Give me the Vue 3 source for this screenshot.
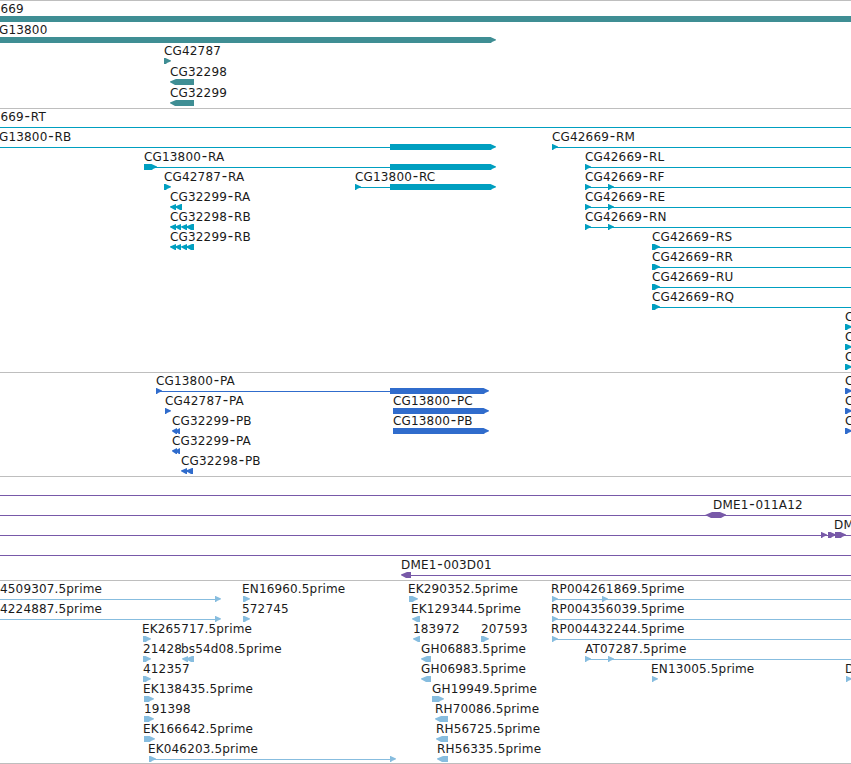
<script setup>
// Glyph spec: '>' forward exon, '<' reverse exon, '=' plain block, 'o' pointed both ways, '-' intron line
const f = (label, x, ...glyphs) => ({ label, x, glyphs })

const geneEnd = ['>', 390, 496]
const reverseExons = [['<', 170, 176], ['<', 175, 181], ['<', 181, 187], ['<', 186, 194]]
const fullLine = ['-', 0, 851]

const tracks = [
  {
    name: 'genes',
    height: 108,
    pitch: 21,
    rows: [
      [f('669', 0.5, ['=', 0, 851])],
      [f('G13800', -1, ['>', -10, 496])],
      [f('CG42787', 164, ['>', 164, 171])],
      [f('CG32298', 170, ['<', 170, 194])],
      [f('CG32299', 170, ['<', 170, 194])],
    ],
  },
  {
    name: 'transcripts',
    height: 264,
    pitch: 20,
    rows: [
      [f('669-RT', 0.5, fullLine)],
      [
        f('G13800-RB', -1, ['-', 0, 390], geneEnd),
        f('CG42669-RM', 552, ['-', 552, 851], ['>', 552, 558]),
      ],
      [
        f('CG13800-RA', 144, ['-', 150, 390], ['>', 144, 157], geneEnd),
        f('CG42669-RL', 585, ['-', 585, 851], ['>', 585, 591]),
      ],
      [
        f('CG42787-RA', 164, ['>', 164, 171]),
        f('CG13800-RC', 355, ['-', 355, 390], ['>', 355, 361], geneEnd),
        f('CG42669-RF', 585, ['-', 585, 851], ['>', 585, 591], ['>', 608, 614]),
      ],
      [
        f('CG32299-RA', 170, ['<', 170, 176], ['<', 175, 182]),
        f('CG42669-RE', 585, ['-', 585, 851], ['>', 585, 591], ['>', 608, 614]),
      ],
      [
        f('CG32298-RB', 170, ...reverseExons),
        f('CG42669-RN', 585, ['-', 585, 851], ['>', 585, 591], ['>', 608, 614]),
      ],
      [
        f('CG32299-RB', 170, ...reverseExons),
        f('CG42669-RS', 652, ['-', 652, 851], ['>', 652, 660]),
      ],
      [f('CG42669-RR', 652, ['-', 652, 851], ['>', 652, 660])],
      [f('CG42669-RU', 652, ['-', 652, 851], ['>', 652, 660])],
      [f('CG42669-RQ', 652, ['-', 652, 851], ['>', 652, 660])],
      [f('C', 845, ['>', 845, 852])],
      [f('C', 845, ['>', 845, 852])],
      [f('C', 845, ['>', 845, 852])],
    ],
  },
  {
    name: 'proteins',
    height: 104,
    pitch: 20,
    rows: [
      [
        f('CG13800-PA', 156, ['-', 156, 390], ['>', 156, 162], ['>', 390, 489]),
        f('C', 845, ['>', 845, 852]),
      ],
      [
        f('CG42787-PA', 165, ['>', 165, 171]),
        f('CG13800-PC', 393, ['>', 393, 489]),
        f('C', 845, ['>', 845, 852]),
      ],
      [
        f('CG32299-PB', 172, ['<', 172, 177], ['<', 175, 180]),
        f('CG13800-PB', 393, ['>', 393, 489]),
        f('C', 845, ['>', 845, 852]),
      ],
      [f('CG32299-PA', 172, ['<', 172, 177], ['<', 175, 180])],
      [f('CG32298-PB', 181, ['<', 181, 187], ['<', 186, 193])],
    ],
  },
  {
    name: 'clones',
    height: 104,
    pitch: 20,
    rows: [
      [f('', 0, fullLine)],
      [f('DME1-011A12', 713, fullLine, ['o', 705, 726])],
      [f('DM', 834, fullLine, ['>', 821, 827], ['>', 828, 836], ['>', 835, 846])],
      [f('', 0, fullLine)],
      [f('DME1-003D01', 401, ['-', 411, 851], ['<', 401, 411])],
    ],
  },
  {
    name: 'ests',
    height: 183,
    pitch: 20,
    rows: [
      [
        f('4509307.5prime', 0, ['-', 0, 215], ['>', 215, 221]),
        f('EN16960.5prime', 242, ['>', 243, 250]),
        f('EK290352.5prime', 408, ['>', 409, 418]),
        f('RP004261869.5prime', 551, ['-', 552, 851], ['>', 552, 558], ['>', 602, 608]),
      ],
      [
        f('4224887.5prime', 0, ['-', 0, 215], ['>', 215, 221]),
        f('572745', 242, ['>', 243, 250]),
        f('EK129344.5prime', 411, ['<', 412, 420]),
        f('RP004356039.5prime', 551, ['-', 552, 851], ['>', 552, 558]),
      ],
      [
        f('EK265717.5prime', 142, ['>', 143, 151]),
        f('183972', 413, ['<', 413, 420]),
        f('207593', 481, ['>', 481, 489]),
        f('RP004432244.5prime', 551, ['-', 552, 851], ['>', 552, 558]),
      ],
      [
        f('21428', 143, ['>', 143, 151]),
        f('bs54d08.5prime', 181, ['<', 182, 188], ['<', 186, 194]),
        f('GH06883.5prime', 421, ['<', 421, 431]),
        f('AT07287.5prime', 585, ['-', 585, 851], ['>', 585, 591], ['>', 608, 614]),
      ],
      [
        f('412357', 143, ['>', 143, 151]),
        f('GH06983.5prime', 421, ['<', 421, 431]),
        f('EN13005.5prime', 651, ['>', 652, 658]),
        f('D', 845, ['>', 846, 852]),
      ],
      [f('EK138435.5prime', 143, ['>', 144, 154]), f('GH19949.5prime', 432, ['>', 432, 444])],
      [f('191398', 144, ['>', 144, 154]), f('RH70086.5prime', 435, ['<', 435, 448])],
      [f('EK166642.5prime', 143, ['>', 144, 155]), f('RH56725.5prime', 436, ['<', 436, 448])],
      [
        f('EK046203.5prime', 148, ['-', 149, 390], ['>', 149, 156], ['>', 390, 396]),
        f('RH56335.5prime', 437, ['<', 437, 448]),
      ],
    ],
  },
]

function glyphPath([kind, a, b]) {
  const tip = Math.min(6, b - a)
  if (kind === '-') return `M${a} 19H${b}V20H${a}Z`
  if (kind === '=') return `M${a} 16H${b}V22H${a}Z`
  if (kind === '>') return `M${a} 16H${b - tip + 0.5}L${b} 18.4V19.2L${b - tip + 2} 21L${b - tip + 1} 22H${a}Z`
  if (kind === '<') return `M${b} 16H${a + tip}L${a} 18.4V19.2L${a + tip - 1} 22H${b}Z`
  return `M${a} 19L${a + 7} 16H${b - 6}L${b} 18.6V19.2L${b - 5} 22H${a + 6}Z`
}
</script>

<template>
  <main class="browser">
    <section
      v-for="track in tracks"
      :key="track.name"
      class="track"
      :class="`track--${track.name}`"
    >
      <svg width="851" :height="track.height - 1" :viewBox="`0 1 851 ${track.height - 1}`">
        <g
          v-for="(row, i) in track.rows"
          :key="i"
          :transform="`translate(0 ${i * track.pitch})`"
        >
          <g v-for="(feature, j) in row" :key="j">
            <path v-for="(g, k) in feature.glyphs" :key="k" :d="glyphPath(g)" />
            <text :x="feature.x" y="13">
              <template v-for="(part, k) in feature.label.split('-')" :key="k"><tspan v-if="k" class="dash" dx="0.7" dy="0.4">-</tspan><tspan :dx="k ? 0.7 : 0" :dy="k ? -0.4 : 0">{{ part }}</tspan></template>
            </text>
          </g>
        </g>
      </svg>
    </section>
  </main>
</template>

<style scoped>
.browser {
  box-sizing: border-box;
  width: 851px;
  height: 764px;
  overflow: hidden;
  background: #fff;
  border-bottom: 1px solid #bebebe;
}

.track {
  border-top: 1px solid #bebebe;
}

.track svg {
  display: block;
  overflow: visible;
}

.track path {
  fill: currentColor;
}

.track text {
  fill: #1a1a1a;
  font-family: 'DejaVu Sans', sans-serif;
  font-size: 12px;
  letter-spacing: 0.16px;
}

.dash {
  font-size: 15px;
}

.track--genes {
  color: #3f8e94;
}

.track--transcripts {
  color: #009fc0;
}

.track--proteins {
  color: #306ccc;
}

.track--clones {
  color: #7859a8;
}

.track--ests {
  color: #87bddf;
}
</style>
